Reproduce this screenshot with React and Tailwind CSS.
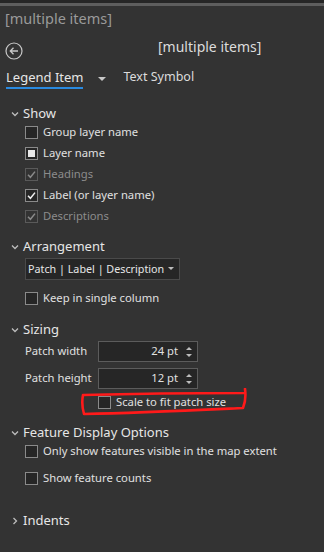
import React from 'react';

const FONT = { fontFamily: '"Noto Sans", "Open Sans", sans-serif' };

function Chevron({ open = true }) {
  return (
    <svg width="8" height="8" viewBox="0 0 8 8" className="shrink-0">
      {open ? (
        <path d="M1 2.5 L4 5.5 L7 2.5" fill="none" stroke="#bdbdbd" strokeWidth="1.3" />
      ) : (
        <path d="M2.5 1 L5.5 4 L2.5 7" fill="none" stroke="#bdbdbd" strokeWidth="1.3" />
      )}
    </svg>
  );
}

function Check({ state = 'off', disabled = false }) {
  return (
    <span
      className={`w-[13px] h-[13px] shrink-0 border flex items-center justify-center ${
        disabled ? 'border-[#5a5a5a] bg-[#333]' : 'border-[#8a8a8a] bg-[#262626]'
      }`}
    >
      {state === 'square' && <span className="w-[7px] h-[7px] bg-[#e8e8e8]" />}
      {state === 'check' && (
        <svg width="11" height="11" viewBox="0 0 11 11">
          <path
            d="M2 5.8 L4.4 8.3 L9 2.6"
            fill="none"
            stroke={disabled ? '#8a8a8a' : '#f0f0f0'}
            strokeWidth="1.5"
          />
        </svg>
      )}
    </span>
  );
}

function CheckRow({ label, state, disabled, className = '' }) {
  return (
    <div className={`flex items-center gap-[5px] h-[21px] ${className}`}>
      <Check state={state} disabled={disabled} />
      <span className={`text-[11.25px] whitespace-nowrap ${disabled ? 'text-[#8c8c8c]' : 'text-[#e0e0e0]'}`}>
        {label}
      </span>
    </div>
  );
}

function Section({ title, open = true, className = '', children }) {
  return (
    <div className={className}>
      <div className="flex items-center gap-[4px] pl-[11px] h-[17px]">
        <Chevron open={open} />
        <span className="text-[13px] leading-[17px] text-[#e6e6e6]">{title}</span>
      </div>
      {children}
    </div>
  );
}

function Spin({ value }) {
  return (
    <div className="w-[100px] h-[21px] border border-[#5c5c5c] bg-[#262626] flex items-center justify-end pr-[4px]">
      <span className="text-[11.25px] text-[#e0e0e0] mr-[7px]">{value}</span>
      <svg width="8" height="14" viewBox="0 0 8 14">
        <path d="M1 5 L4 2 L7 5 Z" fill="#bdbdbd" />
        <path d="M1 9 L4 12 L7 9 Z" fill="#bdbdbd" />
      </svg>
    </div>
  );
}

export default function App() {
  return (
    <div className="w-[324px] h-[552px] bg-[#333333] overflow-hidden" style={FONT}>
      {/* top frame edge */}
      <div className="h-[3px] bg-[#262626]" />
      <div className="h-[3px] bg-[#5e5e5e]" />

      <div className="pl-[5px] h-[24px] text-[14.5px] text-[#9a9a9a] leading-[24px]">[multiple items]</div>

      {/* header */}
      <div className="flex items-start h-[38px]">
        <svg width="18" height="18" viewBox="0 0 18 18" className="ml-[5px] mt-[12px]">
          <circle cx="9" cy="9" r="8" fill="none" stroke="#c8c8c8" strokeWidth="1.2" />
          <path d="M13 9 H5.5 M8.5 5.8 L5.3 9 L8.5 12.2" fill="none" stroke="#c8c8c8" strokeWidth="1.3" />
        </svg>
        <span className="ml-[135px] mt-[7px] text-[14px] leading-[20px] text-[#dcdcdc]">[multiple items]</span>
      </div>

      {/* tabs */}
      <div className="flex items-start pl-[6px]">
        <div className="flex flex-col">
          <span className="text-[13px] text-[#e6e6e6] leading-[18px]">Legend Item</span>
          <span className="h-[2px] bg-[#2a8ae0] mt-[1px]" />
        </div>
        <svg width="8" height="5" viewBox="0 0 8 5" className="ml-[15px] mt-[9px]">
          <path d="M0 0 L8 0 L4 4 Z" fill="#c8c8c8" />
        </svg>
        <span className="ml-[17px] text-[12.5px] text-[#dcdcdc] leading-[18px]">Text Symbol</span>
      </div>

      <Section title="Show" className="mt-[16px]">
        <div className="pl-[25px]">
          <CheckRow label="Group layer name" state="off" />
          <CheckRow label="Layer name" state="square" />
          <CheckRow label="Headings" state="check" disabled />
          <CheckRow label="Label (or layer name)" state="check" />
          <CheckRow label="Descriptions" state="check" disabled />
        </div>
      </Section>

      <Section title="Arrangement" className="mt-[11px]">
        <div className="pl-[25px] mt-[3px]">
          <div className="w-[155px] h-[22px] border border-[#4a4a4a] bg-[#262626] flex items-center justify-between pl-[2px] pr-[5px]">
            <span className="text-[10.75px] whitespace-nowrap text-[#e6e6e6]">Patch | Label | Description</span>
            <svg width="6" height="4" viewBox="0 0 6 4" className="shrink-0">
              <path d="M0 0 L6 0 L3 3 Z" fill="#bdbdbd" />
            </svg>
          </div>
          <CheckRow label="Keep in single column" state="off" className="mt-[8px]" />
        </div>
      </Section>

      <Section title="Sizing" className="mt-[12px]">
        <div className="pl-[25px] mt-[3px] flex flex-col gap-[6px]">
          <div className="flex items-center">
            <span className="w-[73px] text-[11.25px] text-[#e0e0e0]">Patch width</span>
            <Spin value="24 pt" />
          </div>
          <div className="flex items-center">
            <span className="w-[73px] text-[11.25px] text-[#e0e0e0]">Patch height</span>
            <Spin value="12 pt" />
          </div>
        </div>
        <div className="relative pl-[98px] mt-[3px]">
          <CheckRow label="Scale to fit patch size" state="off" />
          {/* red hand-drawn annotation */}
          <svg width="172" height="30" viewBox="0 0 172 30" className="absolute left-[80px] top-[-4px]">
            <path
              d="M3 7 C40 6 110 5 164 5 M165 1 C166 8 165 15 163 20 C120 22 60 25 4 26 C2 19 2 12 3 7"
              fill="none"
              stroke="#ff1a1a"
              strokeWidth="2.6"
              strokeLinecap="round"
              strokeLinejoin="round"
            />
          </svg>
        </div>
      </Section>

      <Section title="Feature Display Options" className="mt-[11px]">
        <div className="pl-[25px]">
          <CheckRow label="Only show features visible in the map extent" state="off" />
          <CheckRow label="Show feature counts" state="off" className="mt-[6px]" />
        </div>
      </Section>

      <Section title="Indents" open={false} className="mt-[23px]" />
    </div>
  );
}
